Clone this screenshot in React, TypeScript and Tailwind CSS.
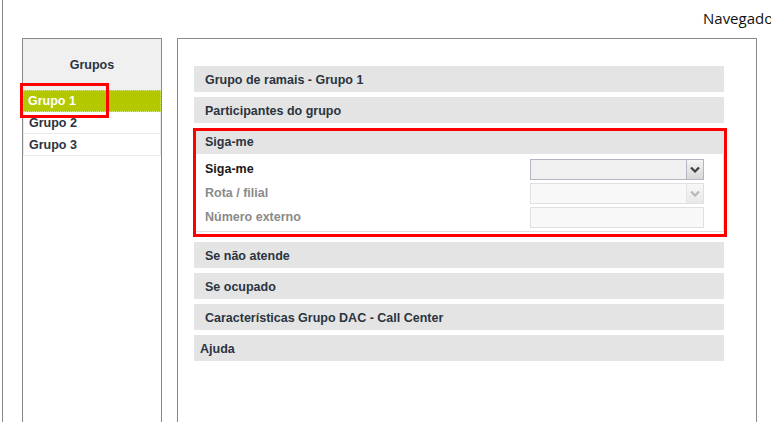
const bars = ["Grupo de ramais - Grupo 1", "Participantes do grupo"];
const lowerBars = ["Se não atende", "Se ocupado", "Características Grupo DAC - Call Center"];

const Chevron = ({ color }: { color: string }) => (
  <svg width="10" height="7" viewBox="0 0 10 7">
    <path d="M1 1.5 L5 5.5 L9 1.5" fill="none" stroke={color} strokeWidth="2.2" />
  </svg>
);

const SelectBox = ({ disabled }: { disabled?: boolean }) => (
  <div
    className={
      disabled
        ? "flex w-[174px] h-[21px] border border-[#e0e0e4] bg-[#f8f8f8]"
        : "flex w-[174px] h-[21px] border border-[#b4b4c4] bg-[#f0f0f0]"
    }
  >
    <div className="flex-1" />
    <div
      className={
        disabled
          ? "w-[17px] flex items-center justify-center bg-gradient-to-b from-[#f8f8f8] to-[#e8e8e8] border-l border-[#e4e4e4]"
          : "w-[17px] flex items-center justify-center bg-gradient-to-b from-[#f4f4f4] to-[#d8d8d8] border-l border-[#b4b4c4]"
      }
    >
      <Chevron color={disabled ? "#b8b8b8" : "#404040"} />
    </div>
  </div>
);

const Bar = ({ label, indent = true }: { label: string; indent?: boolean }) => (
  <div
    className={`h-[26px] w-[530px] bg-[#e4e4e4] flex items-center pt-[2px] text-[12.5px] font-bold text-[#2b3440] ${
      indent ? "pl-[11px]" : "pl-[6px]"
    }`}
  >
    {label}
  </div>
);

export default function App() {
  return (
    <div
      className="relative w-[771px] h-[422px] overflow-hidden bg-white"
      style={{ fontFamily: "'Liberation Sans', Arial, sans-serif" }}
    >
      <div className="ml-[2px] h-full border-l border-[#888]">
        <div
          className="h-[38px] pl-[700px] pt-[7px] whitespace-nowrap text-[15px] text-[#111]"
          style={{ fontFamily: "'Open Sans', sans-serif" }}
        >
          Navegador
        </div>
        <div className="flex pl-[19px]">
          {/* groups list */}
          <div className="w-[140px] h-[400px] border border-[#888] flex flex-col">
            <div className="h-[51px] bg-[#f0f0f0] flex items-center justify-center pt-[2px] text-[12.5px] font-bold text-[#2b3440]">
              Grupos
            </div>
            <div className="h-[22px] bg-[#b4c800] text-white text-[12.5px] font-bold flex items-center pt-[1px] pl-[5px] outline outline-1 outline-dotted outline-[#d8e880] -outline-offset-1">
              Grupo 1
            </div>
            <div className="h-[22px] border-b border-x border-[#ebebeb] text-[12.5px] font-bold text-[#2b3440] flex items-center pt-[1px] pl-[5px]">
              Grupo 2
            </div>
            <div className="h-[22px] border-b border-x border-[#ebebeb] text-[12.5px] font-bold text-[#2b3440] flex items-center pt-[1px] pl-[5px]">
              Grupo 3
            </div>
          </div>

          {/* main panel */}
          <div className="ml-[15px] w-[580px] h-[400px] border border-[#888] pl-[16px] pt-[27px] flex flex-col gap-[5px]">
            {bars.map((b) => (
              <Bar key={b} label={b} />
            ))}
            <div>
              <Bar label="Siga-me" />
              <div className="w-[530px] border-b border-r border-[#e2e2e2] pt-[5px] pb-[3px] flex flex-col gap-[3px] text-[12.5px] font-bold">
                <div className="flex items-center justify-between pl-[11px] pr-[19px]">
                  <span className="text-[#1a1a1a]">Siga-me</span>
                  <SelectBox />
                </div>
                <div className="flex items-center justify-between pl-[11px] pr-[19px]">
                  <span className="text-[#8a8a8a]">Rota / filial</span>
                  <SelectBox disabled />
                </div>
                <div className="flex items-center justify-between pl-[11px] pr-[19px]">
                  <span className="text-[#8a8a8a]">Número externo</span>
                  <div className="w-[174px] h-[21px] border border-[#e0e0e4] bg-[#f8f8f8]" />
                </div>
              </div>
            </div>
            <div className="mt-[5px] flex flex-col gap-[5px]">
              {lowerBars.map((b) => (
                <Bar key={b} label={b} />
              ))}
              <Bar label="Ajuda" indent={false} />
            </div>
          </div>
        </div>
      </div>

      {/* annotation boxes */}
      <div className="absolute left-[20px] top-[83px] w-[89px] h-[35px] border-[3px] border-[#f00]" />
      <div className="absolute left-[193px] top-[128px] w-[534px] h-[109px] border-[3px] border-[#f00]" />
    </div>
  );
}
